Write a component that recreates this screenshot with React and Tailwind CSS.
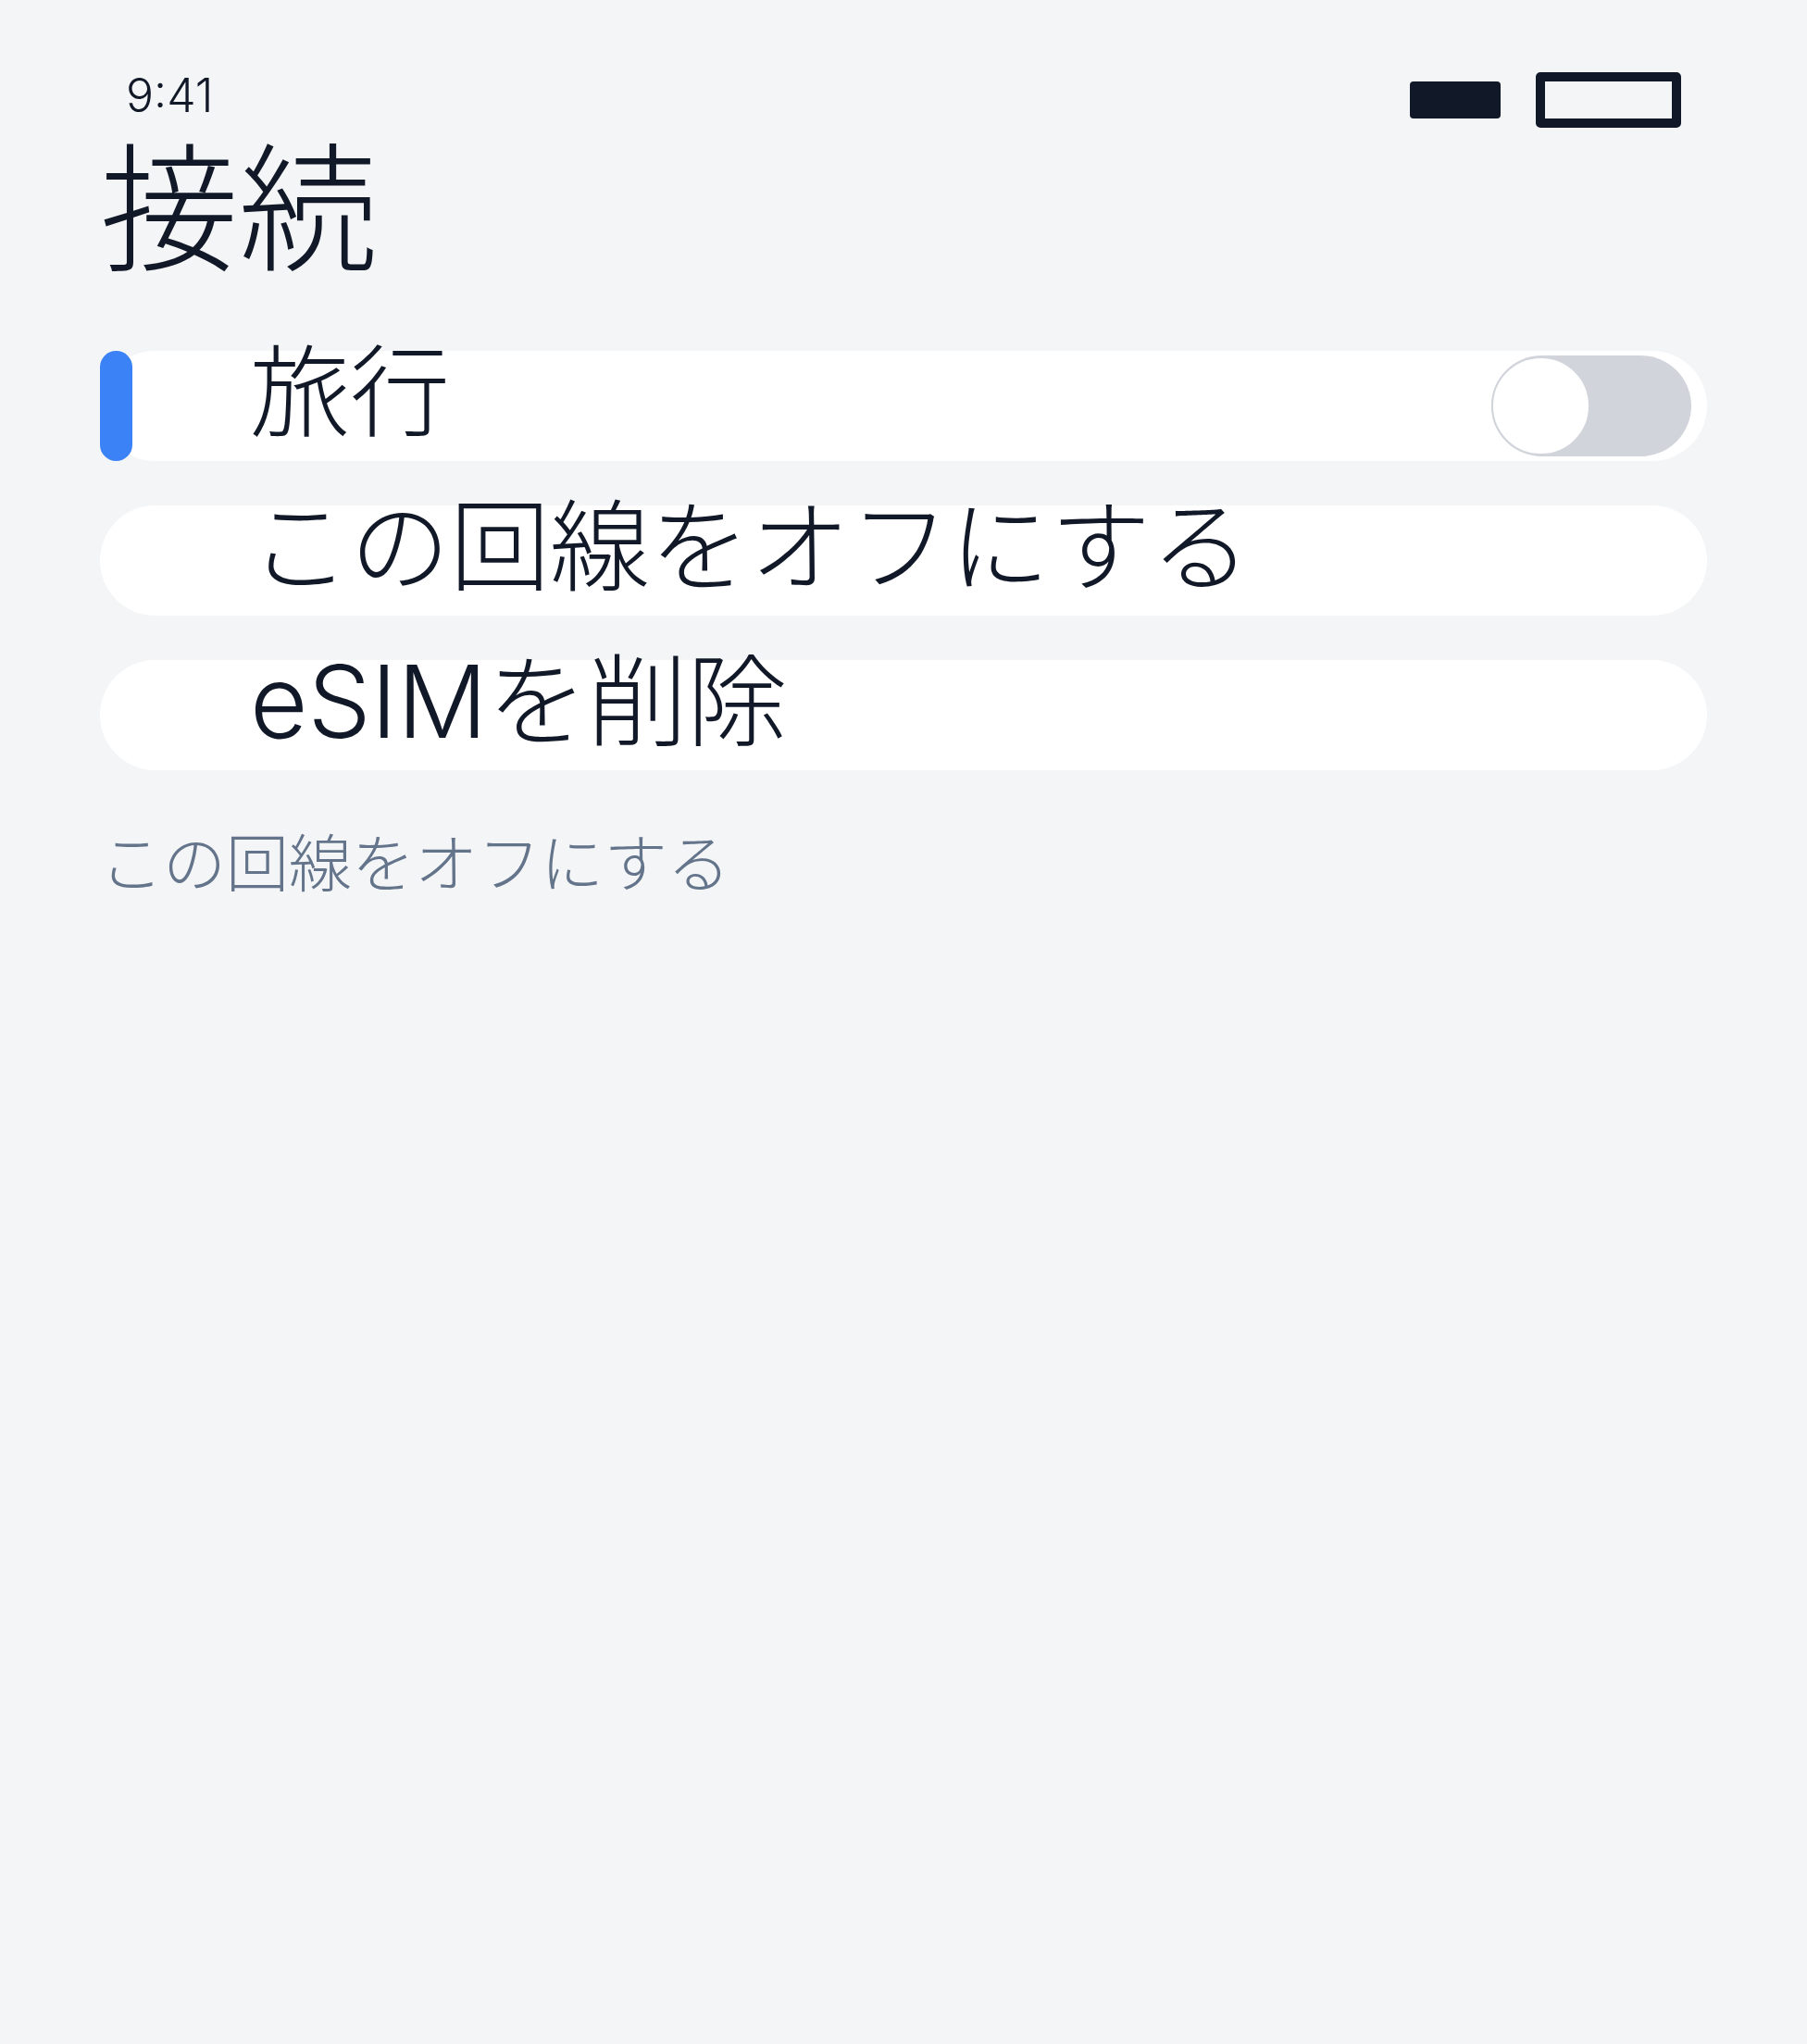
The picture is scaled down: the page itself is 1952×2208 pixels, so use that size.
import { useState } from 'react';

const FONT = { fontFamily: 'Inter, "Noto Sans CJK JP", sans-serif' };

function Toggle({ on, onChange }) {
  return (
    <button
      aria-label="旅行"
      onClick={() => onChange(!on)}
      className="relative ml-auto mr-[17px] self-center w-[216px] h-[109px] rounded-full bg-[#d1d5db] shrink-0"
    >
      <span className="absolute left-0 top-[1px] w-[107px] h-[107px] rounded-full bg-white border-2 border-[#d1d5db]" />
    </button>
  );
}

function Row({ label, active, children }) {
  return (
    <div className="relative flex items-start h-[119px] rounded-full bg-white pl-[162px]">
      {active && <span className="absolute left-0 top-0 h-full w-[35px] rounded-full bg-[#3b82f6]" />}
      <span className="text-[108px] leading-[89px] text-[#111827] whitespace-nowrap">{label}</span>
      {children}
    </div>
  );
}

export default function App() {
  const [travel, setTravel] = useState(false);

  return (
    <div className="min-h-screen bg-[#f4f5f7] font-light" style={FONT}>
      <div className="flex items-start justify-between px-[136px] pt-[78px] h-[138px]">
        <span className="text-[50px] leading-none text-[#111827]">9:41</span>
        <div className="flex items-center gap-[38px] h-[60px]">
          <div className="w-[98px] h-[40px] rounded-[4px] bg-[#111827]" />
          <div className="w-[157px] h-[60px] rounded-[5px] border-[10px] border-[#111827]" />
        </div>
      </div>

      <div className="px-[108px]">
        <h1 className="mt-[14px] text-[150px] leading-none font-light text-[#111827]">接続</h1>

        <div className="mt-[77px] flex flex-col gap-[48px]">
          <Row label="旅行" active>
            <Toggle on={travel} onChange={setTravel} />
          </Row>
          <Row label="この回線をオフにする" />
          <Row label="eSIMを削除" />
        </div>

        <p className="mt-[67px] text-[68px] leading-none text-[#64748b]">この回線をオフにする</p>
      </div>
    </div>
  );
}
